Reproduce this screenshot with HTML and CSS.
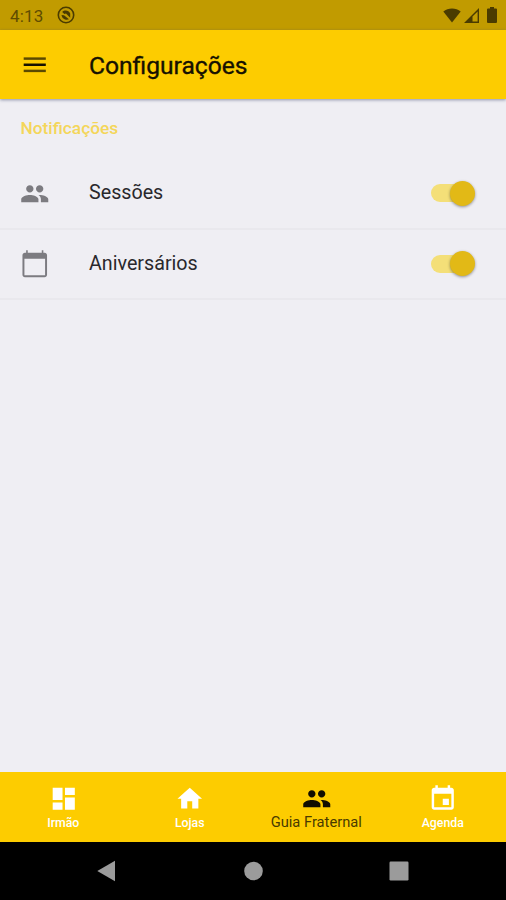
FILE: index.html
```html
<!DOCTYPE html>
<html lang="pt-BR">
<head>
<meta charset="utf-8">
<title>Configurações</title>
<link rel="stylesheet" href="styles.css">
</head>
<body>
<svg class="defs" aria-hidden="true">
  <symbol id="people" viewBox="0 0 24 24"><path d="M16 11c1.66 0 2.99-1.34 2.99-3S17.66 5 16 5s-3 1.34-3 3 1.34 3 3 3zm-8 0c1.66 0 2.99-1.34 2.99-3S9.66 5 8 5 5 6.34 5 8s1.34 3 3 3zm0 2c-2.33 0-7 1.17-7 3.5V19h14v-2.5c0-2.33-4.67-3.5-7-3.5zm8 0c-.29 0-.62.02-.97.05 1.16.84 1.97 1.97 1.97 3.45V19h6v-2.5c0-2.33-4.67-3.5-7-3.5z"/></symbol>
</svg>
<div class="screen">
  <div class="status">
    <span class="time">4:13</span>
    <svg class="badge" viewBox="0 0 18 18"><circle cx="9" cy="9" r="7.7" fill="none" stroke="currentColor" stroke-width="1.6"/><path d="M5.2 6C7.500 3.600 12 4.200 13.200 7.500V11.800L9 7.600 7.400 7.900zM4.500 9L7 9.300 12 13.200C9.500 14.500 5 13.300 4.500 9z" fill="currentColor"/></svg>
    <svg class="wifi" viewBox="0 0 18 15"><path d="M9 14.500L.3 3.600C5-.4 13-.4 17.700 3.600z"/></svg>
    <svg class="signal" viewBox="0 0 15 15"><path fill-rule="evenodd" d="M0 15L15 0V15zM8.500 13.600H13.600V3.400L8.500 8.500z"/></svg>
    <svg class="battery" viewBox="0 0 10 16"><path d="M3 0h4v1.600h2q1 0 1 1V15q0 1-1 1H1q-1 0-1-1V2.600q0-1 1-1h2z"/></svg>
  </div>
  <header class="appbar">
    <svg class="icon" viewBox="0 0 24 24"><path d="M3 18h18v-2H3v2z" opacity=".7"/><path d="M3 13h18v-2H3v2z"/><path d="M3 6v2h18V6H3z" opacity=".7"/></svg>
    <h1>Configurações</h1>
  </header>
  <main>
    <h2>Notificações</h2>
    <div class="row">
      <svg class="icon"><use href="#people"/></svg>
      <span class="label">Sessões</span>
      <span class="switch"><span class="thumb"></span></span>
    </div>
    <div class="row">
      <svg class="icon" viewBox="0 0 24 24"><path d="M20 3h-1V1h-1.300v2H6.300V1H5v2H4c-1.100 0-2 .9-2 2v16c0 1.100.9 2 2 2h16c1.100 0 2-.9 2-2V5c0-1.100-.9-2-2-2zm.4 18.400H3.600V8h16.800z"/></svg>
      <span class="label">Aniversários</span>
      <span class="switch"><span class="thumb"></span></span>
    </div>
  </main>
  <nav class="tabs">
    <div class="tab"><svg class="icon" viewBox="0 0 24 24"><path d="M3 13h8V3H3v10zm0 8h8v-6H3v6zm10 0h8V11h-8v10zm0-18v6h8V3h-8z"/></svg><span>Irmão</span></div>
    <div class="tab"><svg class="icon" viewBox="0 0 24 24"><path d="M10 20v-6h4v6h5v-8h3L12 3 2 12h3v8z"/></svg><span>Lojas</span></div>
    <div class="tab active"><svg class="icon"><use href="#people"/></svg><span>Guia Fraternal</span></div>
    <div class="tab"><svg class="icon" viewBox="0 0 24 24"><path d="M17 12h-5v5h5v-5zM16 1v2H8V1H6v2H5c-1.110 0-1.990.9-1.990 2L3 19c0 1.100.89 2 2 2h14c1.100 0 2-.9 2-2V5c0-1.100-.9-2-2-2h-1V1h-2zm3 18H5V8h14v11z"/></svg><span>Agenda</span></div>
  </nav>
  <div class="system">
    <svg viewBox="0 0 20 22"><path d="M18 .8V21.200L.3 11z"/></svg>
    <svg viewBox="0 0 20 22"><circle cx="10.500" cy="11" r="9.300"/></svg>
    <svg viewBox="0 0 20 22"><rect x=".5" y="1.500" width="19" height="19" rx="1.200"/></svg>
  </div>
</div>
</body>
</html>
```

FILE: styles.css
```css
* { box-sizing: border-box; }
body { margin: 0; font-family: Roboto, sans-serif; background: #efeef3; }
.defs { display: none; }
svg { display: block; fill: currentColor; flex: none; }
.screen { width: 506px; height: 900px; display: flex; flex-direction: column; overflow: hidden; }
.icon { width: 29.5px; height: 29.5px; }

.status { height: 30px; flex: none; background: #c19b00; color: #4a3b00; display: flex; align-items: center; padding: 0 9px 0 10px; }
.time { font-size: 17px; letter-spacing: .2px; width: 47px; padding-top: 1px; color: #5f4c00; }
.badge { width: 18px; height: 18px; margin-right: auto; }
.wifi { width: 18px; height: 15px; margin-right: 3px; }
.signal { width: 15px; height: 15px; margin-right: 8px; }
.battery { width: 10px; height: 16px; }

.appbar { height: 69px; flex: none; background: #fdcc00; color: #161100; display: flex; align-items: center; padding: 0 20px; gap: 39.5px; box-shadow: 0 1px 3px rgba(60, 70, 110, .55); position: relative; }
.appbar h1 { margin: 0; padding-top: 2px; font-size: 24.6px; font-weight: 400; -webkit-text-stroke: .35px currentColor; line-height: 30px; }

main { flex: 1; }
h2 { margin: 0; height: 60px; padding: 19px 20px 0 20.5px; font-size: 17.3px; line-height: 20px; font-weight: 500; color: #f4d65a; }
.row { height: 70.5px; padding: 0 30px 0 20px; display: flex; align-items: center; color: #7c7b80; border-bottom: 2px solid #e9e8ed; }
.label { margin-left: 39.5px; flex: 1; font-size: 19.7px; line-height: 24px; color: #29282c; }
.switch { width: 43px; height: 18px; border-radius: 9px; background: #f4df78; display: flex; align-items: center; justify-content: flex-end; margin-right: 2px; }
.thumb { width: 25px; height: 25px; border-radius: 50%; background: #e2b916; flex: none; margin-right: -1px; box-shadow: 0 1px 3px rgba(0, 0, 0, .4); }

.tabs { height: 70px; flex: none; background: #fdcc00; color: #fff; display: flex; }
.tab { flex: 1; display: flex; flex-direction: column; align-items: center; padding-top: 12px; font-size: 12.3px; line-height: 16px; font-weight: 500; }
.tab span { margin-top: 1px; }
.active { color: #120e00; font-size: 14.7px; font-weight: 400; }
.active span { margin-top: 0; color: #493a00; white-space: nowrap; }

.system { height: 58px; flex: none; background: #000; color: #9b9b9b; display: flex; justify-content: center; align-items: center; gap: 126px; }
.system svg { width: 20px; height: 22px; }
```
